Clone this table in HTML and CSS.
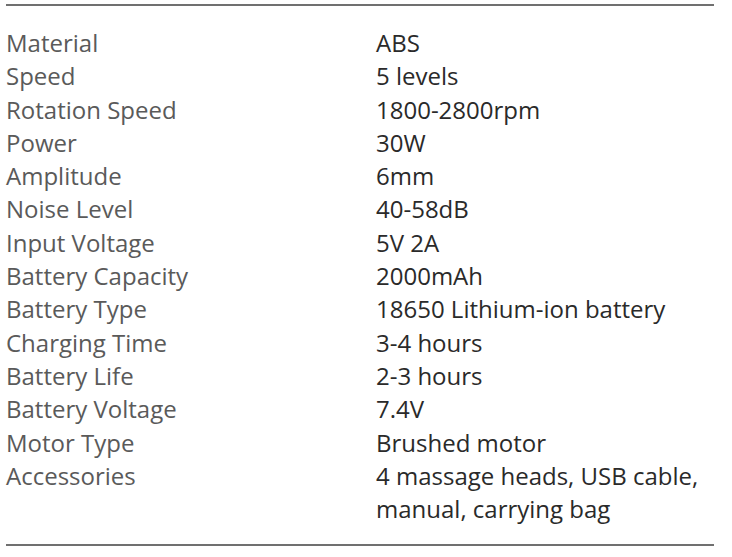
FILE: index.html
```html
<!DOCTYPE html>
<html>
<head>
<meta charset="utf-8">
<link rel="stylesheet" href="styles.css">
</head>
<body>
<div class="specs">
  <div class="row"><div class="k">Material</div><div class="v">ABS</div></div>
  <div class="row"><div class="k">Speed</div><div class="v">5 levels</div></div>
  <div class="row"><div class="k">Rotation Speed</div><div class="v">1800-2800rpm</div></div>
  <div class="row"><div class="k">Power</div><div class="v">30W</div></div>
  <div class="row"><div class="k">Amplitude</div><div class="v">6mm</div></div>
  <div class="row"><div class="k">Noise Level</div><div class="v">40-58dB</div></div>
  <div class="row"><div class="k">Input Voltage</div><div class="v">5V 2A</div></div>
  <div class="row"><div class="k">Battery Capacity</div><div class="v">2000mAh</div></div>
  <div class="row"><div class="k">Battery Type</div><div class="v">18650 Lithium-ion battery</div></div>
  <div class="row"><div class="k">Charging Time</div><div class="v">3-4 hours</div></div>
  <div class="row"><div class="k">Battery Life</div><div class="v">2-3 hours</div></div>
  <div class="row"><div class="k">Battery Voltage</div><div class="v">7.4V</div></div>
  <div class="row"><div class="k">Motor Type</div><div class="v">Brushed motor</div></div>
  <div class="row"><div class="k">Accessories</div><div class="v">4 massage heads, USB cable,<br>manual, carrying bag</div></div>
</div>
</body>
</html>
```
FILE: styles.css
```css
html, body {
  margin: 0;
  padding: 0;
  background: #ffffff;
}
body {
  font-family: "Open Sans", "Noto Sans", sans-serif;
  font-size: 24px;
  line-height: 33.3px;
}
.specs {
  width: 708px;
  margin: 4px 0 0 6px;
  border-top: 2px solid #707070;
  border-bottom: 2px solid #707070;
  padding: 20px 0 19px 0;
}
.row {
  display: grid;
  grid-template-columns: 370px 1fr;
}
.k {
  color: #5a5a5a;
}
.v {
  color: #2a2a2a;
}
```
